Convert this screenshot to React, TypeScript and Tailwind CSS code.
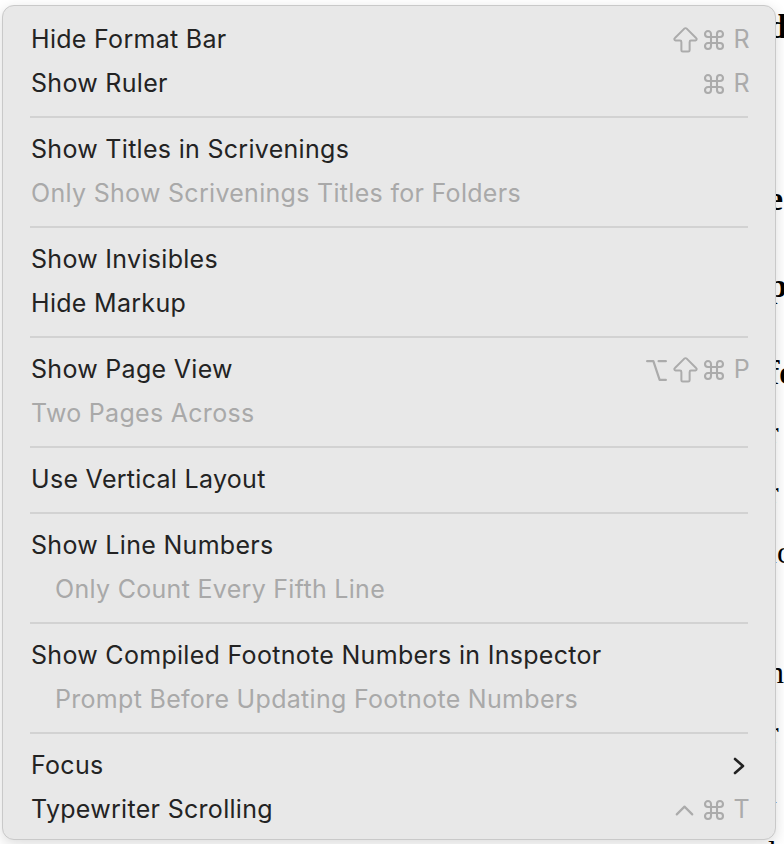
import React from "react";
import { ArrowBigUp, ChevronUp, Command, Option } from "lucide-react";

type Item =
	| { kind: "sep" }
	| {
			kind: "item";
			label: string;
			disabled?: boolean;
			indent?: boolean;
			keys?: string[];
			submenu?: boolean;
	  };

const items: Item[] = [
	{ kind: "item", label: "Hide Format Bar", keys: ["shift", "cmd", "R"] },
	{ kind: "item", label: "Show Ruler", keys: ["cmd", "R"] },
	{ kind: "sep" },
	{ kind: "item", label: "Show Titles in Scrivenings" },
	{ kind: "item", label: "Only Show Scrivenings Titles for Folders", disabled: true },
	{ kind: "sep" },
	{ kind: "item", label: "Show Invisibles" },
	{ kind: "item", label: "Hide Markup" },
	{ kind: "sep" },
	{ kind: "item", label: "Show Page View", keys: ["opt", "shift", "cmd", "P"] },
	{ kind: "item", label: "Two Pages Across", disabled: true },
	{ kind: "sep" },
	{ kind: "item", label: "Use Vertical Layout" },
	{ kind: "sep" },
	{ kind: "item", label: "Show Line Numbers" },
	{ kind: "item", label: "Only Count Every Fifth Line", disabled: true, indent: true },
	{ kind: "sep" },
	{ kind: "item", label: "Show Compiled Footnote Numbers in Inspector" },
	{ kind: "item", label: "Prompt Before Updating Footnote Numbers", disabled: true, indent: true },
	{ kind: "sep" },
	{ kind: "item", label: "Focus", submenu: true },
	{ kind: "item", label: "Typewriter Scrolling", keys: ["ctrl", "cmd", "T"] },
];

// bits of the document that peek out to the right of the menu
const docLines = [
	{ h: "h-[46px]", text: "d", bold: true },
	{ h: "h-[120px]", text: "", bold: true },
	{ h: "h-[58px]", text: "e", bold: true },
	{ h: "h-[116px]", text: "p", bold: true },
	{ h: "h-[58px]", text: "fe", bold: true },
	{ h: "h-[60px]", text: "r" },
	{ h: "h-[60px]", text: "r" },
	{ h: "h-[60px]", text: "io" },
	{ h: "h-[60px]", text: "." },
	{ h: "h-[60px]", text: "n" },
	{ h: "h-[60px]", text: "r" },
	{ h: "h-[60px]", text: "i" },
	{ h: "h-[60px]", text: "l" },
];

const grey = "#ababab";

function Key({ k }: { k: string }) {
	if (k === "cmd")
		return <Command size={24} color={grey} strokeWidth={2.1} className="-mx-[1.5px] shrink-0" />;
	if (k === "shift")
		return (
			<ArrowBigUp
				size={33}
				color={grey}
				strokeWidth={1.45}
				className="-mx-[6px] -my-[5px] shrink-0"
			/>
		);
	if (k === "opt")
		return <Option size={25} color={grey} strokeWidth={2.1} className="-mx-[2px] shrink-0" />;
	if (k === "ctrl")
		return (
			<ChevronUp
				size={31}
				color={grey}
				strokeWidth={1.7}
				className="-mx-[7px] -my-[4px] mr-[-4px] shrink-0"
			/>
		);
	return <span className="ml-[1px] text-[25px] text-[#ababab]">{k}</span>;
}

function Shortcut({ keys }: { keys: string[] }) {
	return (
		<div className="flex items-center gap-[8px]">
			{keys.map((k, i) => (
				<Key key={i} k={k} />
			))}
		</div>
	);
}

export default function App() {
	return (
		<div className="relative h-[844px] w-[784px] overflow-hidden bg-white">
			<div className="flex flex-col pl-[768px] pt-[4px] text-[34px] leading-none text-black [font-family:'Liberation_Serif',serif]">
				{docLines.map((l, i) => (
					<div
						key={i}
						className={`${l.h} flex items-center ${l.bold ? "font-bold" : "font-normal text-[32px]"}`}
					>
						{l.text}
					</div>
				))}
			</div>

			<div className="absolute left-[2px] top-[5px] w-[774px] rounded-[12px] border border-[#c9c9c9] bg-[#e8e8e8] pt-[12px] pb-[7px] shadow-[0_4px_14px_rgba(0,0,0,0.14)] [font-family:Inter,'Noto_Sans',sans-serif]">
				{items.map((it, i) =>
					it.kind === "sep" ? (
						<div key={i} className="flex h-[22px] items-center px-[27px]">
							<div className="h-[2px] w-full bg-[#d2d2d2]" />
						</div>
					) : (
						<div
							key={i}
							className={`flex h-[44px] items-center justify-between pr-[25px] text-[25px] tracking-[0.3px] ${it.indent ? "pl-[52px]" : "pl-[28px]"} ${it.disabled ? "text-[#a9a9a9]" : "text-[#232323]"}`}
						>
							<span>{it.label}</span>
							{it.keys && <Shortcut keys={it.keys} />}
							{it.submenu && (
								<svg width="16" height="20" viewBox="0 0 16 20" className="mr-[3px]">
									<polyline
										points="4,3 12,10 4,17"
										fill="none"
										stroke="#222"
										strokeWidth="2.6"
										strokeLinecap="round"
										strokeLinejoin="round"
									/>
								</svg>
							)}
						</div>
					),
				)}
			</div>
		</div>
	);
}
